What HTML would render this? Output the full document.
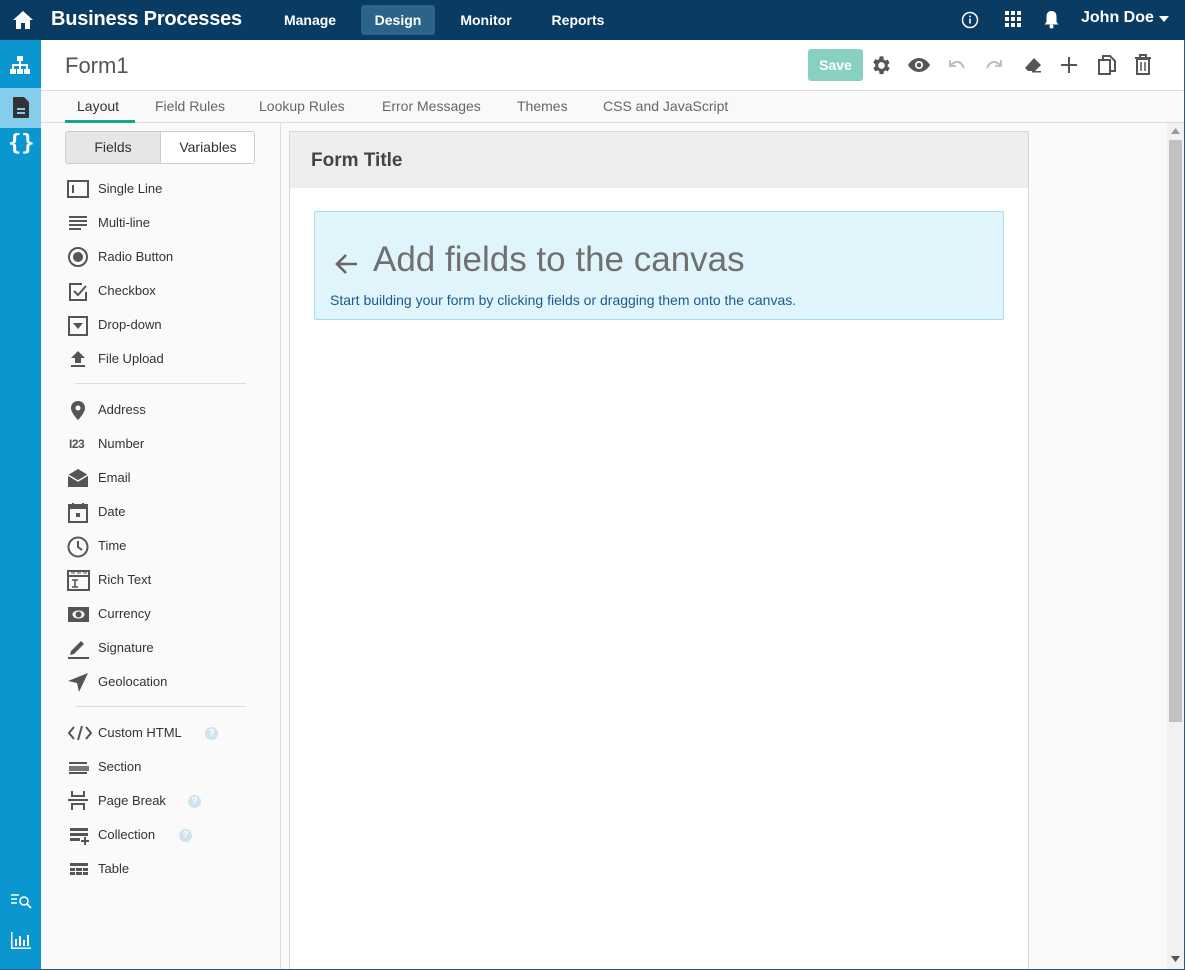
<!DOCTYPE html>
<html><head><meta charset="utf-8"><style>
*{box-sizing:border-box;margin:0;padding:0}
html,body{width:1185px;height:970px;overflow:hidden}
body{font-family:"Liberation Sans",sans-serif;background:#fafafa;position:relative;color:#333}
.top{position:absolute;left:0;top:0;width:1185px;height:40px;background:#0a3b63}
.abs{position:absolute}
.brand{left:51px;top:8px;color:#fff;font-weight:bold;font-size:20px;letter-spacing:-0.2px}
.nav{top:5px;height:30px;color:#fff;font-weight:bold;font-size:14px;line-height:30px;text-align:center;border-radius:3px}
.side{left:0;top:40px;width:41px;height:930px;background:#0a97cf}
.hdr{left:41px;top:40px;width:1144px;height:51px;background:#fff;border-bottom:1px solid #ddd}
.tabs{left:41px;top:91px;width:1144px;height:32px;background:#f9f9f9;border-bottom:1px solid #ddd}
.tab{top:98px;font-size:14px;color:#666}
.item{left:98px;font-size:13px;color:#333}
.ic{left:67px}
.canvas{left:289px;top:131px;width:740px;height:839px;background:#fff;border:1px solid #d6d6d6;border-bottom:none}
</style></head><body>
<div class="top"></div>
<svg class="abs" style="left:12px;top:10px" width="22" height="20" viewBox="0 0 22 20"><path d="M11 1 L1 10 H4 V19 H9 V13 H13 V19 H18 V10 H21 Z" fill="#fff"/></svg>
<div class="abs brand">Business Processes</div>
<div class="abs nav" style="left:269px;width:82px">Manage</div>
<div class="abs nav" style="left:361px;width:74px;background:#2b6488">Design</div>
<div class="abs nav" style="left:445px;width:82px">Monitor</div>
<div class="abs nav" style="left:537px;width:82px">Reports</div>
<svg class="abs" style="left:961px;top:11px" width="18" height="18" viewBox="0 0 18 18"><circle cx="9" cy="9" r="7.5" fill="none" stroke="#fff" stroke-width="1.5"/><rect x="8.2" y="7.5" width="1.6" height="5" fill="#fff"/><rect x="8.2" y="4.6" width="1.6" height="1.6" fill="#fff"/></svg>
<svg class="abs" style="left:1005px;top:11px" width="17" height="17" viewBox="0 0 17 17" fill="#fff"><rect x="0" y="0" width="4" height="4"/><rect x="6" y="0" width="4" height="4"/><rect x="12" y="0" width="4" height="4"/><rect x="0" y="6" width="4" height="4"/><rect x="6" y="6" width="4" height="4"/><rect x="12" y="6" width="4" height="4"/><rect x="0" y="12" width="4" height="4"/><rect x="6" y="12" width="4" height="4"/><rect x="12" y="12" width="4" height="4"/></svg>
<svg class="abs" style="left:1043px;top:10px" width="17" height="19" viewBox="0 0 17 19"><path d="M8.5 1 C4.5 1 3.5 4 3.5 7 V12 L1.5 14.5 H15.5 L13.5 12 V7 C13.5 4 12.5 1 8.5 1Z" fill="#fff"/><circle cx="8.5" cy="16.5" r="2" fill="#fff"/></svg>
<div class="abs" style="left:1081px;top:9px;color:#fff;font-weight:bold;font-size:16px">John Doe</div>
<svg class="abs" style="left:1159px;top:16px" width="10" height="6"><path d="M0 0H10L5 6Z" fill="#fff"/></svg>

<div class="abs side"></div>
<div class="abs" style="left:0;top:88px;width:41px;height:40px;background:#86cded"></div>
<svg class="abs" style="left:9px;top:55px" width="22" height="22" viewBox="0 0 22 22" fill="#fff"><rect x="8" y="1" width="6" height="5"/><rect x="10" y="6" width="2" height="4"/><rect x="3" y="9" width="16" height="2"/><rect x="3" y="9" width="2" height="5"/><rect x="10" y="9" width="2" height="5"/><rect x="17" y="9" width="2" height="5"/><rect x="1" y="14" width="6" height="5"/><rect x="8" y="14" width="6" height="5"/><rect x="15" y="14" width="6" height="5"/></svg>
<svg class="abs" style="left:12px;top:97px" width="18" height="22" viewBox="0 0 18 22"><path d="M2 0H12L17 5V20Q17 21 16 21H2Q1 21 1 20V1Q1 0 2 0Z" fill="#333"/><rect x="5" y="11" width="8" height="2" fill="#86cded"/><rect x="5" y="15" width="8" height="2" fill="#86cded"/></svg>
<div class="abs" style="left:8px;top:131px;color:#fff;font-weight:bold;font-size:22px;font-family:'DejaVu Sans Mono',monospace">{}</div>
<svg class="abs" style="left:10px;top:892px" width="23" height="18" viewBox="0 0 23 18" fill="none" stroke="#fff" stroke-width="1.6"><path d="M1 3H9M1 7H7M1 11H7"/><circle cx="14" cy="9" r="4"/><path d="M17 12L21 16"/></svg>
<svg class="abs" style="left:10px;top:932px" width="22" height="18" viewBox="0 0 22 18" fill="#fff"><rect x="1" y="0" width="1.5" height="17"/><rect x="1" y="15.5" width="20" height="1.5"/><rect x="5" y="7" width="2" height="7"/><rect x="9" y="4" width="2" height="10"/><rect x="13" y="8" width="2" height="6"/><rect x="17" y="3" width="2" height="11"/></svg>

<div class="abs hdr"></div>
<div class="abs" style="left:65px;top:53px;font-size:22px;color:#555">Form1</div>
<div class="abs" style="left:808px;top:49px;width:55px;height:32px;background:#88d0c2;border-radius:3px;color:#fff;font-weight:bold;font-size:14px;line-height:32px;text-align:center">Save</div>
<svg class="abs" style="left:870px;top:54px" width="23" height="23" viewBox="0 0 24 24"><path fill="#555" d="M19.4 13a7.5 7.5 0 0 0 0-2l2.1-1.6-2-3.5-2.5 1a7 7 0 0 0-1.7-1L15 2.5h-4l-.4 2.9a7 7 0 0 0-1.7 1l-2.5-1-2 3.5L6.6 11a7.5 7.5 0 0 0 0 2l-2.1 1.6 2 3.5 2.5-1a7 7 0 0 0 1.7 1l.3 2.9h4l.4-2.9a7 7 0 0 0 1.7-1l2.5 1 2-3.5zM13 15.5A3.5 3.5 0 1 1 13 8.5a3.5 3.5 0 0 1 0 7z" transform="translate(-1 0)"/></svg>
<svg class="abs" style="left:907px;top:57px" width="24" height="16" viewBox="0 0 24 16"><path d="M12 1C6 1 2 6 1 8c1 2 5 7 11 7s10-5 11-7C22 6 18 1 12 1z" fill="#555"/><circle cx="12" cy="8" r="4" fill="#fff"/><circle cx="12" cy="8" r="2.3" fill="#555"/></svg>
<svg class="abs" style="left:948px;top:59px" width="18" height="12" viewBox="0 0 18 12" fill="none" stroke="#bbb" stroke-width="2"><path d="M3 6C8 1 13 2 16 9"/><path d="M2 1V7H8" stroke-width="1.8"/></svg>
<svg class="abs" style="left:985px;top:59px" width="18" height="12" viewBox="0 0 18 12" fill="none" stroke="#bbb" stroke-width="2"><path d="M15 6C10 1 5 2 2 9"/><path d="M16 1V7H10" stroke-width="1.8"/></svg>
<svg class="abs" style="left:1023px;top:57px" width="20" height="17" viewBox="0 0 20 17"><path d="M11 1L18 8L12 14H5L2 11Z" fill="#555"/><rect x="9" y="14" width="9" height="1.5" fill="#555"/></svg>
<svg class="abs" style="left:1060px;top:56px" width="18" height="18"><path d="M9 1V17M1 9H17" stroke="#555" stroke-width="2"/></svg>
<svg class="abs" style="left:1097px;top:54px" width="20" height="22" viewBox="0 0 20 22" fill="none" stroke="#555" stroke-width="2"><path d="M6 5V2H13L18 7V17H14"/><rect x="2" y="6" width="11" height="14"/></svg>
<svg class="abs" style="left:1134px;top:54px" width="18" height="22" viewBox="0 0 18 22" fill="none" stroke="#555" stroke-width="2"><path d="M1 4H17M6 4V1H12V4"/><rect x="3" y="5" width="12" height="15"/><path d="M7 8V17M11 8V17" stroke-width="1.5"/></svg>

<div class="abs tabs"></div>
<div class="abs tab" style="left:77px;color:#333">Layout</div>
<div class="abs" style="left:65px;top:120px;width:70px;height:3px;background:#17a689"></div>
<div class="abs tab" style="left:155px">Field Rules</div>
<div class="abs tab" style="left:259px">Lookup Rules</div>
<div class="abs tab" style="left:382px">Error Messages</div>
<div class="abs tab" style="left:517px">Themes</div>
<div class="abs tab" style="left:603px">CSS and JavaScript</div>

<div class="abs" style="left:280px;top:123px;width:1px;height:847px;background:#ddd"></div>
<div class="abs" style="left:65px;top:131px;width:190px;height:33px;border:1px solid #ccc;border-radius:3px;background:#fff;overflow:hidden">
<div style="position:absolute;left:0;top:0;width:95px;height:31px;background:#e6e6e6;border-right:1px solid #ccc;text-align:center;line-height:31px;font-size:14px;color:#333">Fields</div>
<div style="position:absolute;left:95px;top:0;width:94px;height:31px;text-align:center;line-height:31px;font-size:14px;color:#333">Variables</div></div>

<svg class="abs ic" style="top:180px" width="24" height="18"><rect x="1" y="1" width="20" height="16" fill="none" stroke="#555" stroke-width="2"/><rect x="5" y="5" width="2" height="8" fill="#555"/></svg>
<div class="abs item" style="top:181px">Single Line</div>
<svg class="abs ic" style="top:215px" width="22" height="16" fill="#555"><rect x="2" y="1" width="18" height="2"/><rect x="2" y="5" width="18" height="2"/><rect x="2" y="9" width="18" height="2"/><rect x="2" y="13" width="12" height="2"/></svg>
<div class="abs item" style="top:215px">Multi-line</div>
<svg class="abs ic" style="top:247px" width="24" height="22"><circle cx="11" cy="10" r="9" fill="none" stroke="#555" stroke-width="2"/><circle cx="11" cy="10" r="5" fill="#555"/></svg>
<div class="abs item" style="top:249px">Radio Button</div>
<svg class="abs ic" style="top:281px" width="24" height="22" fill="none" stroke="#555" stroke-width="2"><path d="M15 3H3V19H19V11"/><path d="M7 10L11 14L19 5"/></svg>
<div class="abs item" style="top:283px">Checkbox</div>
<svg class="abs ic" style="top:316px" width="24" height="20"><rect x="2" y="1" width="18" height="18" fill="none" stroke="#555" stroke-width="2"/><path d="M6 7H16L11 13Z" fill="#555"/></svg>
<div class="abs item" style="top:317px">Drop-down</div>
<svg class="abs ic" style="top:350px" width="24" height="20" fill="#555"><path d="M11 1L4 8H8V13H14V8H18Z"/><rect x="4" y="15" width="14" height="2"/></svg>
<div class="abs item" style="top:351px">File Upload</div>
<div class="abs" style="left:75px;top:383px;width:171px;height:1px;background:#ddd"></div>
<svg class="abs ic" style="top:400px" width="24" height="22"><path d="M11 1C7 1 4 4 4 8C4 13 11 20 11 20S18 13 18 8C18 4 15 1 11 1Z" fill="#555"/><circle cx="11" cy="8" r="2.5" fill="#fafafa"/></svg>
<div class="abs item" style="top:402px">Address</div>
<div class="abs" style="left:69px;top:437px;font-size:12px;font-weight:bold;color:#555;letter-spacing:-0.5px">I23</div>
<div class="abs item" style="top:436px">Number</div>
<svg class="abs ic" style="top:468px" width="24" height="20" fill="#555"><path d="M1 7L11 1L21 7V19H1Z"/><path d="M1 7L11 13L21 7" fill="none" stroke="#fafafa" stroke-width="1.5"/></svg>
<div class="abs item" style="top:470px">Email</div>
<svg class="abs ic" style="top:502px" width="24" height="22"><rect x="2" y="3" width="18" height="17" fill="none" stroke="#555" stroke-width="2"/><rect x="2" y="3" width="18" height="4" fill="#555"/><rect x="5" y="1" width="2" height="4" fill="#555"/><rect x="15" y="1" width="2" height="4" fill="#555"/><rect x="9" y="11" width="4" height="4" fill="#555"/></svg>
<div class="abs item" style="top:504px">Date</div>
<svg class="abs ic" style="top:536px" width="24" height="22" fill="none" stroke="#555" stroke-width="2"><circle cx="11" cy="11" r="9.5"/><path d="M11 5V11L15 14"/></svg>
<div class="abs item" style="top:538px">Time</div>
<svg class="abs ic" style="top:570px" width="24" height="22"><rect x="1" y="1" width="21" height="19" fill="none" stroke="#555" stroke-width="2"/><rect x="1" y="5" width="21" height="2" fill="#555"/><path d="M4 3H8M10 3H14M16 3H20" stroke="#555"/><path d="M5 10H11M8 10V17M5 17H11" stroke="#555" stroke-width="1.6"/></svg>
<div class="abs item" style="top:572px">Rich Text</div>
<svg class="abs ic" style="top:605px" width="24" height="20"><rect x="1" y="2" width="21" height="15" fill="#555"/><ellipse cx="11.5" cy="9.5" rx="6" ry="4" fill="#fafafa"/><circle cx="11.5" cy="9.5" r="3" fill="#555"/></svg>
<div class="abs item" style="top:606px">Currency</div>
<svg class="abs ic" style="top:638px" width="24" height="22" fill="#555"><path d="M3 17L4 13L14 3L17 6L7 16Z"/><rect x="1" y="19" width="21" height="2"/></svg>
<div class="abs item" style="top:640px">Signature</div>
<svg class="abs ic" style="top:672px" width="24" height="22"><path d="M21 1L1 9L10 11L12 20Z" fill="#555"/></svg>
<div class="abs item" style="top:674px">Geolocation</div>
<div class="abs" style="left:75px;top:706px;width:171px;height:1px;background:#ddd"></div>
<svg class="abs ic" style="top:724px" width="26" height="18" fill="none" stroke="#555" stroke-width="2"><path d="M7 3L2 9L7 15M19 3L24 9L19 15M15 2L11 16"/></svg>
<div class="abs item" style="top:725px">Custom HTML</div>
<div class="abs" style="left:205px;top:727px;width:13px;height:13px;border-radius:50%;background:#cfe3ee;color:#fff;font-size:10px;font-weight:bold;text-align:center;line-height:13px">?</div>
<svg class="abs ic" style="top:759px" width="24" height="18" fill="#555"><rect x="2" y="3" width="18" height="2"/><rect x="2" y="7" width="20" height="5" fill="#777"/><rect x="2" y="13" width="18" height="2"/></svg>
<div class="abs item" style="top:759px">Section</div>
<svg class="abs ic" style="top:790px" width="24" height="22" fill="#555"><path d="M5 1V6H17V1" fill="none" stroke="#555" stroke-width="2"/><rect x="1" y="9" width="20" height="2"/><path d="M5 20V14H17V20" fill="none" stroke="#555" stroke-width="2"/></svg>
<div class="abs item" style="top:793px">Page Break</div>
<div class="abs" style="left:188px;top:795px;width:13px;height:13px;border-radius:50%;background:#cfe3ee;color:#fff;font-size:10px;font-weight:bold;text-align:center;line-height:13px">?</div>
<svg class="abs ic" style="top:826px" width="24" height="20" fill="#555"><rect x="3" y="2" width="18" height="3"/><rect x="3" y="7" width="18" height="3"/><rect x="3" y="12" width="10" height="3"/><path d="M18 11V19M14 15H22" stroke="#555" stroke-width="2"/></svg>
<div class="abs item" style="top:827px">Collection</div>
<div class="abs" style="left:179px;top:829px;width:13px;height:13px;border-radius:50%;background:#cfe3ee;color:#fff;font-size:10px;font-weight:bold;text-align:center;line-height:13px">?</div>
<svg class="abs ic" style="top:861px" width="24" height="18" fill="#555"><rect x="3" y="2" width="18" height="3"/><rect x="3" y="7" width="5" height="3"/><rect x="9" y="7" width="6" height="3"/><rect x="16" y="7" width="5" height="3"/><rect x="3" y="11" width="5" height="3"/><rect x="9" y="11" width="6" height="3"/><rect x="16" y="11" width="5" height="3"/></svg>
<div class="abs item" style="top:861px">Table</div>

<div class="abs canvas"></div>
<div class="abs" style="left:290px;top:132px;width:738px;height:56px;background:#eee"></div>
<div class="abs" style="left:311px;top:150px;font-size:19px;font-weight:bold;color:#444">Form Title</div>
<div class="abs" style="left:314px;top:211px;width:690px;height:109px;background:#e0f4fc;border:1px solid #a9dcef;border-radius:2px"></div>
<svg class="abs" style="left:334px;top:252px" width="26" height="24" fill="none" stroke="#666" stroke-width="2.6"><path d="M23 12H3M12 3L3 12L12 21"/></svg>
<div class="abs" style="left:373px;top:240px;font-size:35px;color:#707070">Add fields to the canvas</div>
<div class="abs" style="left:330px;top:292px;font-size:14px;color:#1d5b8c">Start building your form by clicking fields or dragging them onto the canvas.</div>

<div class="abs" style="left:1167px;top:123px;width:17px;height:847px;background:#f1f1f1"></div>
<svg class="abs" style="left:1171px;top:128px" width="9" height="6"><path d="M0 6H9L4.5 0Z" fill="#999"/></svg>
<div class="abs" style="left:1169px;top:140px;width:13px;height:582px;background:#c1c1c1"></div>
<svg class="abs" style="left:1171px;top:956px" width="9" height="6"><path d="M0 0H9L4.5 6Z" fill="#555"/></svg>
<div class="abs" style="left:1184px;top:40px;width:1px;height:930px;background:#2a5b85"></div>
<div class="abs" style="left:0;top:969px;width:1185px;height:1px;background:#2a5b85"></div>
</body></html>
